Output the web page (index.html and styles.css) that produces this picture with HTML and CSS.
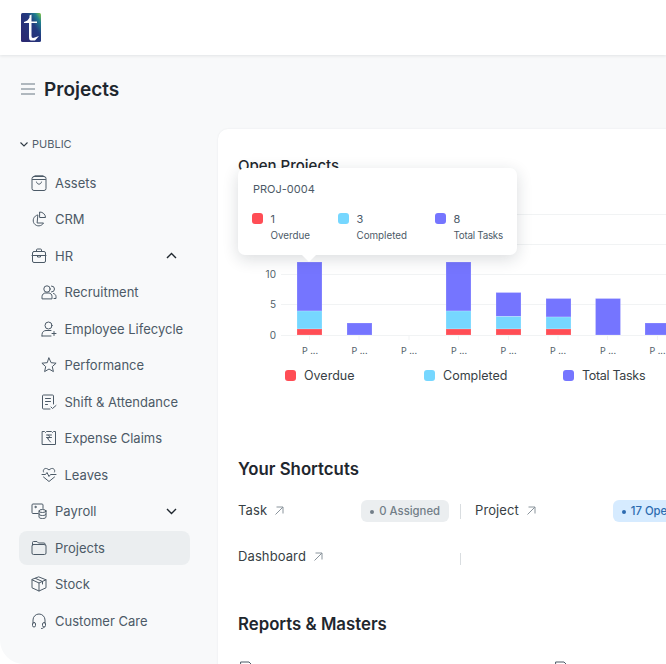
FILE: index.html
```html
<!DOCTYPE html>
<html lang="en">
<head>
<meta charset="utf-8">
<title>Projects</title>
<link rel="stylesheet" href="styles.css">
</head>
<body>
<header class="topbar">
  <svg class="logo" viewBox="0 0 20 29" width="20" height="29">
    <defs>
      <linearGradient id="lg" x1="0.1" y1="0.8" x2="1" y2="0">
        <stop offset="0" stop-color="#2b2a72"/>
        <stop offset=".55" stop-color="#223a80"/>
        <stop offset=".8" stop-color="#1f7f8f"/>
        <stop offset="1" stop-color="#8ccb45"/>
      </linearGradient>
    </defs>
    <rect width="20" height="29" rx="1.500" fill="url(#lg)"/>
    <path d="M8.500 2.500 L10.500 1.500 V8.500 H16 V10 H10.500 V23 Q10.500 25.500 13 24.800 L18 23 L14 27.500 H10 Q8 27.500 8 24 V10 H3 V9 Q7 8 8.500 4.500Z" fill="#fff"/>
  </svg>
</header>

<div class="shell">
  <aside class="sidebar">
    <div class="page-title">
      <svg class="hamburger" width="14" height="12" viewBox="0 0 14 12"><path d="M0 1h14M0 6h14M0 11h14"/></svg>
      <h1>Projects</h1>
    </div>
    <div class="section-label">
      <svg class="chev-small" width="8" height="5" viewBox="0 0 8 5"><path d="M.5.5 4 4 7.500.5"/></svg>
      <span>PUBLIC</span>
    </div>
    <nav class="nav">
      <a class="nav-item"><svg class="ico" viewBox="0 0 16 16"><rect x="1" y="1.500" width="14" height="14" rx="2"/><path d="M1.500 4.500h13M3 1.500 4 .8h8l1 .7M5.500 7c.5 3 4.500 3 5 0"/></svg><span>Assets</span></a>
      <a class="nav-item"><svg class="ico" viewBox="0 0 16 16"><path d="M6.500 4a5.500 5.500 0 1 0 6 8H6.500z"/><path d="M9 1a5.500 5.500 0 0 1 5.500 5.500H9z"/></svg><span>CRM</span></a>
      <a class="nav-item"><svg class="ico" viewBox="0 0 16 16"><rect x="1.500" y="3.500" width="13" height="11" rx="1.500"/><path d="M1 7.500h14M5.500 3.500V2a1 1 0 0 1 1-1h3a1 1 0 0 1 1 1v1.500M6.500 7.500v1.500h3V7.500"/></svg><span>HR</span><svg class="chev" width="11" height="7" viewBox="0 0 11 7"><path d="M1 6 5.500 1.500 10 6"/></svg></a>
      <div class="sub">
        <a class="nav-item"><svg class="ico" viewBox="0 0 16 16"><circle cx="6" cy="5" r="3.200"/><path d="M1 14.500v-2c0-2 2-3.500 3-3.500h4c1.500 0 3 1.500 3 3.500v2zM10.500 2a3 3 0 0 1 0 6M12.500 9.500c1.500.5 2.500 1.500 2.500 3v2h-2"/></svg><span>Recruitment</span></a>
        <a class="nav-item"><svg class="ico" viewBox="0 0 16 16"><circle cx="7.500" cy="4.500" r="3.500"/><path d="M1 15v-1.500C1 11 3 9.500 5 9.500h5M1 15h9M13 10.500v4M11 12.500h4"/></svg><span>Employee Lifecycle</span></a>
        <a class="nav-item"><svg class="ico" viewBox="0 0 16 16"><path d="M8 1l2.100 4.700 5 .5-3.800 3.400 1.100 5L8 12l-4.400 2.600 1.100-5L.9 6.200l5-.5z"/></svg><span>Performance</span></a>
        <a class="nav-item"><svg class="ico" viewBox="0 0 16 16"><path d="M9 15H2.500a1 1 0 0 1-1-1V2a1 1 0 0 1 1-1h9a1 1 0 0 1 1 1v8M4.500 4.500h5M4.500 7.500h5M4.500 10.500h2M10 13l1.500 1.500 3.500-3"/></svg><span>Shift &amp; Attendance</span></a>
        <a class="nav-item"><svg class="ico" viewBox="0 0 16 16"><path d="M1.500 1.500h2l1 1 1-1h5l1 1 1-1h2v13h-13z"/><path d="M5.500 5h5M5.500 7.500h5M7 5c2 0 2 3.500-.5 3.500L9.500 12"/></svg><span>Expense Claims</span></a>
        <a class="nav-item"><svg class="ico" viewBox="0 0 16 16"><path d="M1 7.500h3.500l1.500-2 2 4 1.500-2H15M2.500 5c-1-2 1-4 3-3.500 1 .3 2 1 2.500 1.500.5-.5 1.500-1.200 2.500-1.500 2-.5 4 1.500 3 3.500M2.500 10 8 14.500 13.500 10"/></svg><span>Leaves</span></a>
      </div>
      <a class="nav-item"><svg class="ico" viewBox="0 0 16 16"><path d="M7 10.500H2a1 1 0 0 1-1-1V2a1 1 0 0 1 1-1h9a1 1 0 0 1 1 1v3.500"/><circle cx="4.500" cy="4" r=".7"/><ellipse cx="11.500" cy="8" rx="3.500" ry="1.500"/><path d="M8 8v6c0 1 1.500 1.500 3.500 1.500S15 15 15 14V8M8 11c0 1 1.500 1.500 3.500 1.500S15 12 15 11"/></svg><span>Payroll</span><svg class="chev" width="11" height="7" viewBox="0 0 11 7"><path d="M1 1l4.500 4.500L10 1"/></svg></a>
      <a class="nav-item active"><svg class="ico" viewBox="0 0 16 16"><rect x="1" y="4.500" width="14" height="10" rx="1.500"/><path d="M1.500 5V2.500a1 1 0 0 1 1-1h3.500l1.500 1.500h5.500a1 1 0 0 1 1 1V5"/></svg><span>Projects</span></a>
      <a class="nav-item"><svg class="ico" viewBox="0 0 16 16"><path d="M8 1l7 2.800v8L8 15l-7-3.200v-8zM1 3.800 8 7l7-3.200M8 7v8M4.500 2.400l7 3.100v2.500"/></svg><span>Stock</span></a>
      <a class="nav-item"><svg class="ico" viewBox="0 0 16 16"><path d="M2 10V7a6 6 0 0 1 12 0v3"/><rect x="1.500" y="9.500" width="3" height="4.500" rx="1.500"/><rect x="11.500" y="9.500" width="3" height="4.500" rx="1.500"/><path d="M13 14c0 1-1 1.500-2.500 1.500"/></svg><span>Customer Care</span></a>
    </nav>
  </aside>

  <main class="card">
    <h2 class="chart-title">Open Projects</h2>

    <div class="tooltip">
      <div class="tooltip-title">PROJ-0004</div>
      <div class="tooltip-items">
        <div class="tip tip-a"><i class="swatch red"></i><div><b>1</b><small>Overdue</small></div></div>
        <div class="tip tip-b"><i class="swatch cyan"></i><div><b>3</b><small>Completed</small></div></div>
        <div class="tip"><i class="swatch violet"></i><div><b>8</b><small class="tight">Total Tasks</small></div></div>
      </div>
    </div>

    <svg class="chart" width="460" height="160" viewBox="218 205 460 160">
      <g class="grid">
        <path d="M281 214.500H678M281 244.500H678M281 274.500H678M281 304.500H678M281 335.500H678"/>
        <path d="M309.500 335v5M359 335v5M409 335v5M458.500 335v5M508.500 335v5M558 335v5M607.500 335v5M657.500 335v5"/>
      </g>
      <g class="ylabels">
        <text x="276" y="278">10</text>
        <text x="276" y="308">5</text>
        <text x="276" y="338.500">0</text>
      </g>
      <g class="bars">
        <rect class="bv" x="297" y="262" width="25" height="49"/><rect class="bc" x="297" y="311" width="25" height="18"/><rect class="br" x="297" y="329" width="25" height="6"/>
        <rect class="bv" x="347" y="323" width="25" height="12"/>
        <rect class="bv" x="446" y="262" width="25" height="49"/><rect class="bc" x="446" y="311" width="25" height="18"/><rect class="br" x="446" y="329" width="25" height="6"/>
        <rect class="bv" x="496" y="292.500" width="25" height="24"/><rect class="bc" x="496" y="316.500" width="25" height="12.500"/><rect class="br" x="496" y="329" width="25" height="6"/>
        <rect class="bv" x="546" y="298.500" width="25" height="18.500"/><rect class="bc" x="546" y="317" width="25" height="12"/><rect class="br" x="546" y="329" width="25" height="6"/>
        <rect class="bv" x="595.500" y="298.500" width="25" height="36.500"/>
        <rect class="bv" x="645" y="323" width="25" height="12"/>
      </g>
      <g class="xlabels">
        <text x="310" y="354">P ...</text><text x="359.500" y="354">P ...</text><text x="409" y="354">P ...</text><text x="459" y="354">P ...</text><text x="508.500" y="354">P ...</text><text x="558" y="354">P ...</text><text x="608" y="354">P ...</text><text x="657.500" y="354">P ...</text>
      </g>
    </svg>

    <div class="legend">
      <div class="legend-item"><i class="swatch red"></i><span>Overdue</span></div>
      <div class="legend-item"><i class="swatch cyan"></i><span>Completed</span></div>
      <div class="legend-item"><i class="swatch violet"></i><span class="tight">Total Tasks</span></div>
    </div>

    <h2 class="section-title shortcuts-title">Your Shortcuts</h2>
    <div class="shortcut-row">
      <div class="shortcut"><a class="link">Task<svg class="arrow" width="9" height="9" viewBox="0 0 9 9"><path d="M.5 8.500l7.500-7.500M1.500 1H8v6.500"/></svg></a><span class="pill gray">0 Assigned</span></div>
      <div class="divider"></div>
      <div class="shortcut"><a class="link">Project<svg class="arrow" width="9" height="9" viewBox="0 0 9 9"><path d="M.5 8.500l7.500-7.500M1.500 1H8v6.500"/></svg></a><span class="pill blue">17 Open</span></div>
    </div>
    <div class="shortcut-row second">
      <div class="shortcut"><a class="link">Dashboard<svg class="arrow" width="9" height="9" viewBox="0 0 9 9"><path d="M.5 8.500l7.500-7.500M1.500 1H8v6.500"/></svg></a></div>
      <div class="divider short"></div>
    </div>

    <h2 class="section-title reports-title">Reports &amp; Masters</h2>
    <div class="reports">
      <svg class="ico" viewBox="0 0 16 16"><path d="M3 1h8l3 3v11H3z"/></svg>
      <svg class="ico" viewBox="0 0 16 16"><path d="M3 1h8l3 3v11H3z"/></svg>
    </div>
  </main>
</div>
</body>
</html>
```

FILE: styles.css
```css
* { box-sizing: border-box; }

html, body {
  margin: 0;
  height: 664px;
  overflow: hidden;
  background: #fff;
  font-family: Inter, "Liberation Sans", sans-serif;
  color: #1f272e;
}

.topbar {
  position: relative;
  z-index: 2;
  height: 55px;
  background: #fff;
  box-shadow: 0 1px 3px rgba(25, 39, 52, 0.1);
  padding: 13px 0 0 21px;
}

.logo { display: block; }

.shell {
  display: flex;
  height: 609px;
  background: #f8f9fa;
  border-bottom-left-radius: 24px;
}

.sidebar {
  flex: 0 0 218px;
  padding: 21px 0 0 19px;
}

.page-title {
  display: flex;
  align-items: center;
  gap: 9px;
  height: 28px;
  padding-left: 2px;
}

.page-title h1 {
  margin: 0;
  font-size: 19px;
  line-height: 28px;
  font-weight: 600;
  color: #1f272e;
}

.hamburger { fill: none; stroke: #98a2ab; stroke-width: 1.500; margin-top: -2px; }

.section-label {
  display: flex;
  align-items: center;
  gap: 4px;
  height: 16px;
  margin-top: 32px;
  padding-left: 1px;
  font-size: 11px;
  color: #525f6b;
}

.chev-small { fill: none; stroke: #2f3a44; stroke-width: 1.100; }

.nav {
  display: flex;
  flex-direction: column;
  gap: 2.500px;
  width: 171px;
  margin-top: 13.800px;
}

.sub {
  display: flex;
  flex-direction: column;
  gap: 2.500px;
  padding-left: 9.500px;
}

.nav-item {
  display: flex;
  align-items: center;
  gap: 8px;
  height: 34px;
  padding: 0 13px 0 12px;
  border-radius: 8px;
  font-size: 13px;
  white-space: nowrap;
  color: #4c5a67;
}

.nav-item.active { background: #ebeef0; }

.nav-item .chev { margin-left: auto; fill: none; stroke: #1f272e; stroke-width: 1.400; }

.ico {
  flex: none;
  width: 16px;
  height: 16px;
  fill: none;
  stroke: #4c5a67;
  stroke-width: 1;
  stroke-linejoin: round;
  stroke-linecap: round;
}

.card {
  position: relative;
  flex: 0 0 auto;
  width: 520px;
  height: 640px;
  margin-top: 74px;
  padding: 27px 0 0 20px;
  background: #fff;
  border-radius: 10px 0 0 0;
  box-shadow: 0 0 2px rgba(25, 39, 52, 0.08);
}

.chart-title {
  margin: 0;
  font-size: 15px;
  line-height: 20px;
  font-weight: 500;
  color: #1f272e;
}

.chart {
  display: block;
  margin: 29px 0 0 -20px;
}

.grid path { fill: none; stroke: #f1f3f4; stroke-width: 1; }

.ylabels text {
  font-size: 10px;
  fill: #525f6b;
  text-anchor: end;
}

.xlabels text {
  font-size: 9px;
  fill: #525f6b;
  text-anchor: middle;
}

.bars rect { stroke: #fff; stroke-opacity: 0.2; stroke-width: 1; }

.bv { fill: #7575ff; }
.bc { fill: #76d7ff; }
.br { fill: #ff4d55; }

.tooltip {
  position: absolute;
  z-index: 1;
  left: 20px;
  top: 39px;
  width: 279px;
  height: 87px;
  padding: 14px 14px 0 14px;
  background: #fff;
  border-radius: 7px;
  box-shadow: 0 4px 16px rgba(25, 39, 52, 0.16);
  color: #4c5a67;
}

.tooltip::after {
  content: "";
  position: absolute;
  left: 64px;
  bottom: -7px;
  border: 7px solid transparent;
  border-top-color: #fff;
  border-bottom-width: 0;
}

.tooltip-title {
  font-size: 11px;
  line-height: 14px;
  padding-left: 1px;
}

.tooltip-items {
  display: flex;
  margin-top: 16px;
}

.tip { display: flex; flex: none; gap: 7.500px; white-space: nowrap; }
.tip-a { width: 86px; }
.tip-b { width: 97px; }

.tip b, .tip small { display: block; }

.tip b {
  font-size: 11px;
  line-height: 14px;
  font-weight: 400;
}

.tip small {
  margin-top: 3px;
  font-size: 9.800px;
  line-height: 14px;
}

.tip small.tight { letter-spacing: -0.25px; }

.swatch {
  display: block;
  flex: none;
  width: 11px;
  height: 11px;
  border-radius: 3px;
}

.tip .swatch { margin-top: 1px; }

.swatch.red { background: #ff4d55; }
.swatch.cyan { background: #76d7ff; }
.swatch.violet { background: #7575ff; }

.legend {
  display: flex;
  height: 20px;
  margin-left: 47px;
}

.legend-item {
  display: flex;
  align-items: center;
  gap: 8px;
  width: 139px;
  font-size: 12.500px;
  color: #383f45;
}

.legend-item .tight { letter-spacing: -0.3px; }

.section-title {
  margin: 0;
  font-size: 16.800px;
  line-height: 24px;
  font-weight: 600;
  color: #1f272e;
}

.shortcuts-title { margin-top: 72px; }
.reports-title { margin-top: 44px; }

.shortcut-row {
  display: flex;
  align-items: center;
  height: 22px;
  margin-top: 19px;
}

.shortcut-row.second { margin-top: 24px; }

.shortcut {
  display: flex;
  align-items: center;
  justify-content: space-between;
  flex: 0 0 211px;
}

.link {
  display: flex;
  align-items: center;
  gap: 8px;
  padding-bottom: 2px;
  font-size: 13px;
  letter-spacing: 0.1px;
  color: #383f45;
}

.arrow { fill: none; stroke: #8a949c; stroke-width: 1; }

.pill {
  display: inline-flex;
  align-items: center;
  height: 22px;
  padding: 0 9px 0 18px;
  border-radius: 6px;
  font-size: 11.300px;
  font-weight: 500;
  position: relative;
  white-space: nowrap;
}

.pill::before {
  content: "";
  position: absolute;
  left: 9px;
  top: 9.500px;
  width: 4px;
  height: 4px;
  border-radius: 50%;
  background: currentColor;
}

.pill.gray { background: #ebeef0; color: #727e88; }
.pill.blue { background: #d6ebff; color: #2d6bb0; margin-right: 3px; }

.divider {
  flex: none;
  width: 1px;
  height: 15px;
  margin: 0 14px 0 11px;
  background: #d9dde0;
}

.divider.short { height: 12px; margin-top: 4px; }

.reports {
  display: flex;
  gap: 299px;
  margin-top: 25px;
}
```
